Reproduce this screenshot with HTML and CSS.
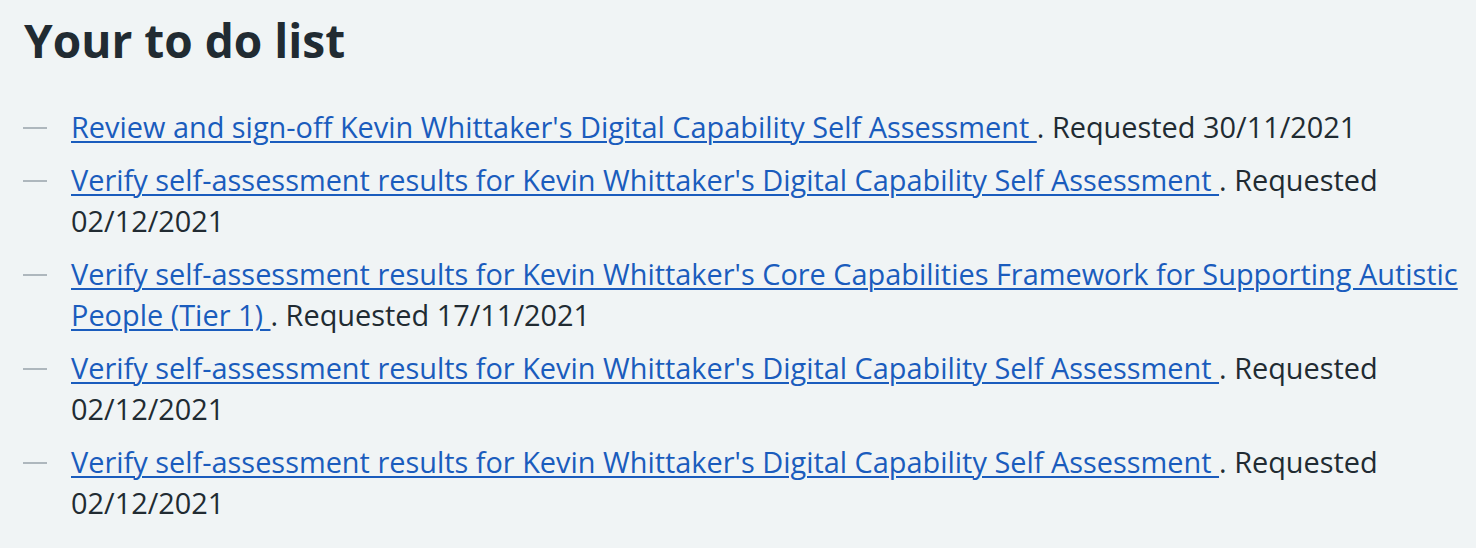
FILE: index.html
```html
<!DOCTYPE html>
<html lang="en">
<head>
<meta charset="utf-8">
<title>Your to do list</title>
<link rel="stylesheet" href="styles.css">
</head>
<body>
<main class="page">
  <h1 class="title">Your to do list</h1>
  <ul class="todo">
    <li class="todo-item"><span class="todo-text"><a class="todo-link" href="#">Review and sign-off Kevin Whittaker's Digital Capability Self Assessment </a>. Requested 30/11/2021</span></li>
    <li class="todo-item"><span class="todo-text"><a class="todo-link" href="#">Verify self-assessment results for Kevin Whittaker's Digital Capability Self Assessment </a>. Requested 02/12/2021</span></li>
    <li class="todo-item"><span class="todo-text"><a class="todo-link" href="#">Verify self-assessment results for Kevin Whittaker's Core Capabilities Framework for Supporting Autistic People (Tier 1) </a>. Requested 17/11/2021</span></li>
    <li class="todo-item"><span class="todo-text"><a class="todo-link" href="#">Verify self-assessment results for Kevin Whittaker's Digital Capability Self Assessment </a>. Requested 02/12/2021</span></li>
    <li class="todo-item"><span class="todo-text"><a class="todo-link" href="#">Verify self-assessment results for Kevin Whittaker's Digital Capability Self Assessment </a>. Requested 02/12/2021</span></li>
  </ul>
</main>
</body>
</html>
```

FILE: styles.css
```css
html, body {
  margin: 0;
  padding: 0;
  background: #f0f4f5;
}
body {
  font-family: "Open Sans", "Noto Sans", Arial, sans-serif;
  color: #212b32;
}
.page {
  padding: 12px 0 0 23px;
}
.title {
  margin: 0 0 38px 1px;
  font-size: 46px;
  line-height: 56px;
  font-weight: 700;
  color: #212b32;
}
.todo {
  list-style: none;
  margin: 0;
  padding: 0;
}
.todo-item {
  display: flex;
  gap: 24px;
  font-size: 28.9px;
  line-height: 41px;
  margin-bottom: 12px;
}
.todo-item::before {
  content: "";
  flex: 0 0 24px;
  height: 2px;
  margin-top: 21px;
  background: #aeb7bd;
}
.todo-link {
  color: #1a5cbd;
  text-decoration: underline;
  text-underline-offset: 3px;
  text-decoration-thickness: 2px;
}
```
